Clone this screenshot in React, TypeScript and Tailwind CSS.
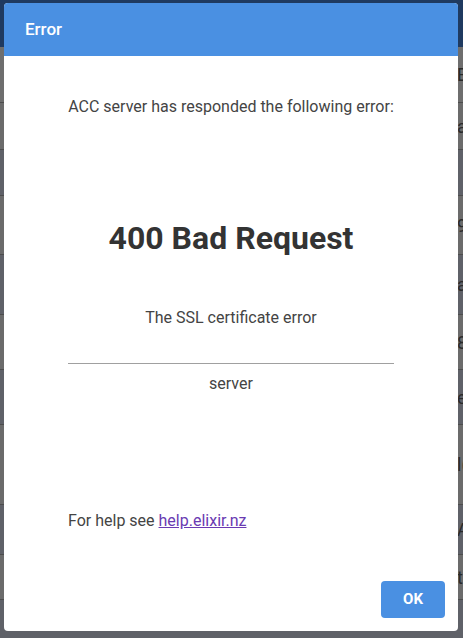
import React from 'react';

const rows = [
  { h: 56, bg: 'bg-[#6e6e6e]', edge: 'B' },
  { h: 47, bg: 'bg-[#6b6b6b]', edge: 'a' },
  { h: 46, bg: 'bg-[#5f6168]', edge: '' },
  { h: 59, bg: 'bg-[#6b6b6b]', edge: '9' },
  { h: 60, bg: 'bg-[#5f6168]', edge: 'a' },
  { h: 55, bg: 'bg-[#6b6b6b]', edge: '8' },
  { h: 55, bg: 'bg-[#5f6168]', edge: 'e)' },
  { h: 80, bg: 'bg-[#6b6b6b]', edge: 'l(' },
  { h: 50, bg: 'bg-[#5f6168]', edge: 'A(' },
  { h: 45, bg: 'bg-[#6b6b6b]', edge: 't' },
  { h: 40, bg: 'bg-[#5f6168]', edge: '' },
];

const App: React.FC = () => {
  return (
    <div className="relative w-[463px] h-[638px] overflow-hidden bg-[#6b6b6b] font-['Roboto',sans-serif]">
      {/* dimmed page behind the dialog */}
      <div className="h-[47px] bg-[#1f3a60]" />
      <div className="flex flex-col">
        {rows.map((r, i) => (
          <div
            key={i}
            style={{ height: r.h }}
            className={`${r.bg} border-b border-[#4d4d4d] flex items-center justify-end text-[#2a2a2a] text-[18px]`}
          >
            <span className="w-[6px] overflow-hidden whitespace-nowrap">{r.edge}</span>
          </div>
        ))}
      </div>

      {/* dialog */}
      <div className="absolute left-[4px] top-[3px] w-[454px] h-[628px] bg-white rounded-[4px] flex flex-col overflow-hidden">
        <div className="h-[53px] bg-[#4a90e2] flex items-center pl-[21px] text-white text-[17px] font-medium shrink-0">
          Error
        </div>
        <div className="flex flex-col px-[64px] text-[#444] text-[16px] leading-[20px] text-center">
          <p className="mt-[41px]">ACC server has responded the following error:</p>
          <p className="mt-[102px] text-[32px] leading-[38px] font-bold text-[#333]">400 Bad Request</p>
          <p className="mt-[51px]">The SSL certificate error</p>
          <div className="mt-[35px] border-t border-[#a0a0a0]" />
          <p className="mt-[10px]">server</p>
          <p className="mt-[117px] text-left">
            For help see <a className="text-[#6a3ab2] underline">help.elixir.nz</a>
          </p>
        </div>
        <div className="flex justify-end pr-[13px] mt-[50px]">
          <button className="w-[64px] h-[37px] rounded-[4px] bg-[#4a90e2] text-white text-[15px] font-bold">
            OK
          </button>
        </div>
      </div>
    </div>
  );
};

export default App;
